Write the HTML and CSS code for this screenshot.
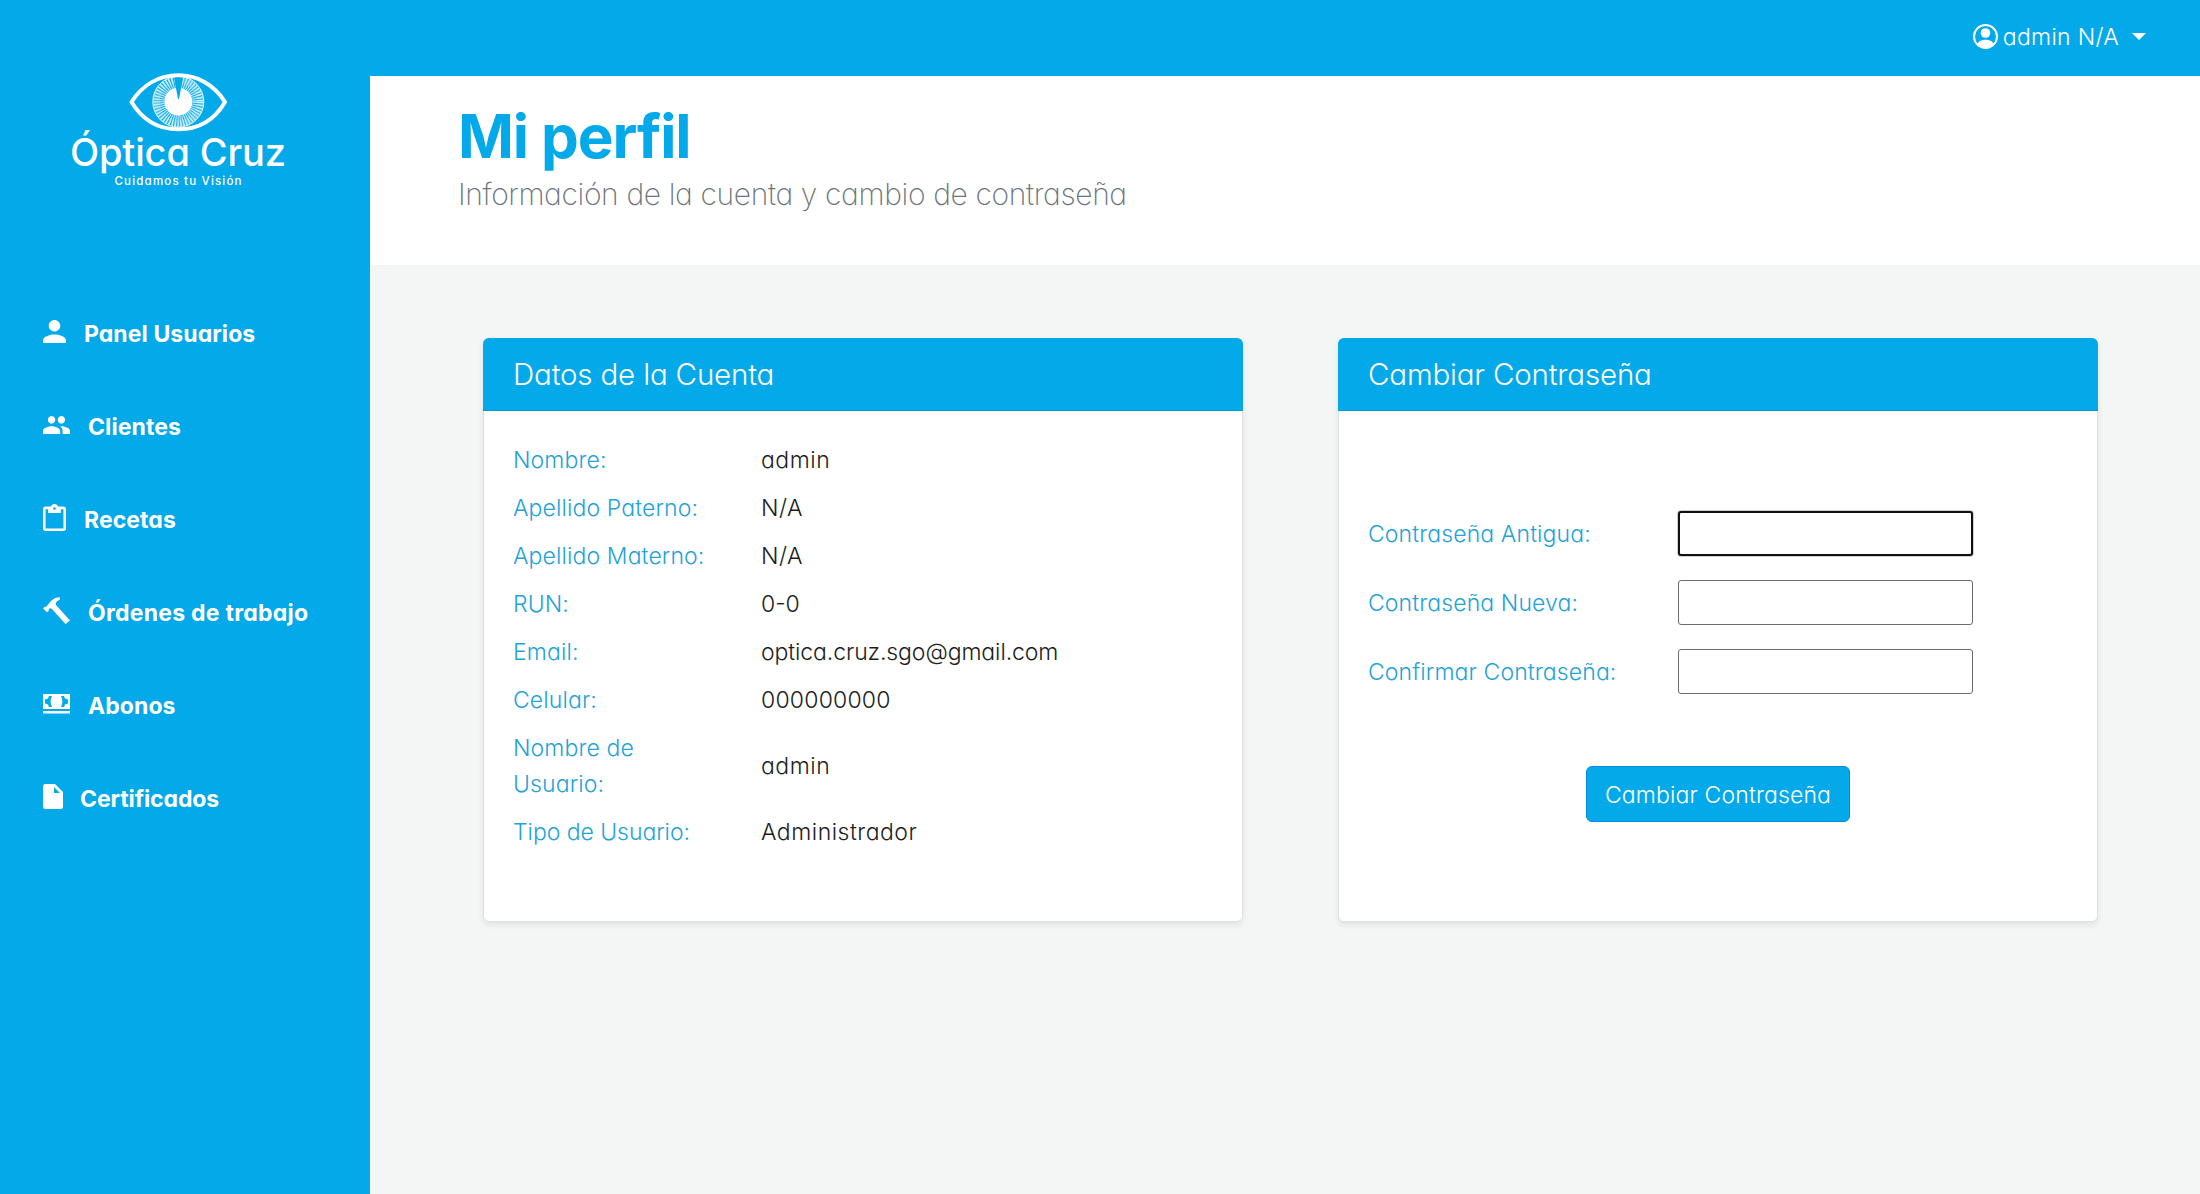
FILE: index.html
```html
<!DOCTYPE html>
<html lang="es">
<head>
<meta charset="utf-8">
<title>Mi perfil - Óptica Cruz</title>
<link rel="stylesheet" href="styles.css">
</head>
<body>
<div class="layout">
  <aside class="sidebar">
    <svg class="logo" width="260" height="140" viewBox="50 60 260 140" role="img" aria-label="Óptica Cruz">
      <path class="eye" d="M131.500 102C143 84 160 75.300 178.300 75.300S214 84 225 102C214 121 197 129.300 178.300 129.300S143 121 131.500 102Z"/>
      <circle class="iris-rays" cx="178.300" cy="101.700" r="19.500"/>
      <circle class="iris-rays fine" cx="178.300" cy="101.700" r="22"/>
      <circle class="iris-ring" cx="178.300" cy="101.700" r="25.500"/>
      <circle class="iris-core" cx="178.300" cy="101.700" r="14"/>
      <path class="pupil" d="M174 77.800Q178.500 76.600 183 77.800L179 99H178Z"/>
      <text class="brand" x="70" y="165.500" textLength="216" lengthAdjust="spacing">Óptica Cruz</text>
      <text class="tagline" x="114.500" y="185.300" textLength="127" lengthAdjust="spacing">Cuidamos tu Visión</text>
    </svg>
    <nav class="menu">
      <a class="menu-item"><svg width="23" height="23" viewBox="4 4 16 16"><path d="M12 12c2.200 0 4-1.800 4-4s-1.800-4-4-4-4 1.800-4 4 1.800 4 4 4zm0 2c-2.700 0-8 1.340-8 4v2h16v-2c0-2.660-5.300-4-8-4z"/></svg><span>Panel Usuarios</span></a>
      <a class="menu-item"><svg width="27" height="18" viewBox="1 5 22 14" preserveAspectRatio="none"><path d="M16 11c1.660 0 2.990-1.340 2.990-3S17.660 5 16 5s-3 1.340-3 3 1.340 3 3 3zm-8 0c1.660 0 2.990-1.340 2.990-3S9.660 5 8 5 5 6.340 5 8s1.340 3 3 3zm0 2c-2.330 0-7 1.170-7 3.500V19h14v-2.500c0-2.330-4.670-3.500-7-3.500zm8 0c-.29 0-.62.020-.97.050 1.160.84 1.970 1.970 1.970 3.450V19h6v-2.500c0-2.330-4.670-3.500-7-3.500z"/></svg><span>Clientes</span></a>
      <a class="menu-item"><svg width="23" height="27" viewBox="3 0 18 21" preserveAspectRatio="none"><path d="M19 2h-4.180C14.400.840 13.300 0 12 0S9.600.840 9.180 2H5c-1.100 0-2 .9-2 2v15c0 1.100.9 2 2 2h14c1.100 0 2-.9 2-2V4c0-1.100-.9-2-2-2zm-7 .5c.55 0 1 .45 1 1s-.45 1-1 1-1-.45-1-1 .45-1 1-1zM19 19H5V4h2v3h10V4h2v15z"/></svg><span>Recetas</span></a>
      <a class="menu-item wide"><svg width="27" height="27" viewBox="0 0 27 27"><path d="M0 11.500L2 9.500 3 10 8 4C11 1 14 .2 17 .3L16.500 3C13.500 4 12.500 5.500 13 8L27 23.500 22.500 27 8.500 11.500 6.800 11.200 5.500 13 5.700 14 4 15.200Z"/></svg><span>Órdenes de trabajo</span></a>
      <a class="menu-item"><svg width="27" height="20" viewBox="0 0 27 20"><path fill-rule="evenodd" d="M0 0H27V15H0ZM2 5.500V9.500L5 10.500 6 13H9Q6.300 7.500 9 2H6L5 4.500ZM25 5.500L22 4.500 21 2H18Q20.700 7.500 18 13H21L22 10.500 25 9.500ZM0 17H27V19.500H0Z"/></svg><span>Abonos</span></a>
      <a class="menu-item narrow"><svg width="20" height="25" viewBox="0 0 20 25"><path fill-rule="evenodd" d="M2.500 0H12L20 8V22.500Q20 25 17.500 25H2.500Q0 25 0 22.500V2.500Q0 0 2.500 0ZM11 3V9H17Z"/></svg><span>Certificados</span></a>
    </nav>
  </aside>
  <div class="main">
    <header class="topbar">
      <svg width="25" height="25" viewBox="0 0 25 25"><circle class="ring" cx="12.500" cy="12.500" r="11.500"/><circle cx="12.500" cy="9" r="4.800"/><path d="M4.500 20C5.500 17 9 15.700 12.500 15.700S19.500 17 20.500 20Q17 24.300 12.500 24.300T4.500 20Z"/></svg>
      <span class="user">admin N/A</span>
      <i class="caret"></i>
    </header>
    <section class="page-head">
      <h1>Mi perfil</h1>
      <p>Información de la cuenta y cambio de contraseña</p>
    </section>
    <main class="cards">
      <section class="card">
        <h2>Datos de la Cuenta</h2>
        <dl class="data">
          <dt>Nombre:</dt><dd class="short">admin</dd>
          <dt>Apellido Paterno:</dt><dd class="short">N/A</dd>
          <dt>Apellido Materno:</dt><dd class="short">N/A</dd>
          <dt>RUN:</dt><dd>0-0</dd>
          <dt>Email:</dt><dd class="email">optica.cruz.sgo@gmail.com</dd>
          <dt>Celular:</dt><dd class="digits">000000000</dd>
          <dt>Nombre de<br>Usuario:</dt><dd class="short">admin</dd>
          <dt class="type">Tipo de Usuario:</dt><dd class="short">Administrador</dd>
        </dl>
      </section>
      <section class="card">
        <h2>Cambiar Contraseña</h2>
        <form class="password-form">
          <label for="old">Contraseña Antigua:</label><input class="active" id="old" type="password">
          <label for="new">Contraseña Nueva:</label><input id="new" type="password">
          <label for="confirm">Confirmar Contraseña:</label><input id="confirm" type="password">
          <button type="button">Cambiar Contraseña</button>
        </form>
      </section>
    </main>
  </div>
</div>
</body>
</html>
```
FILE: styles.css
```css
* { box-sizing: border-box; }

body {
  margin: 0;
  font: 300 23px/36px Inter, "Liberation Sans", sans-serif;
  font-feature-settings: "cv11";
  color: #1b1e21;
  background: #f4f6f6;
}

.layout {
  display: grid;
  grid-template-columns: 370px 1fr;
  min-height: 1194px;
}

.sidebar {
  background: #04a9e9;
  color: #fff;
  padding-top: 60px;
}

.logo {
  display: block;
  margin-left: 50px;
}

.eye { fill: none; stroke: #fff; stroke-width: 4; stroke-linejoin: round; }
.iris-rays { fill: none; stroke: #fff; stroke-opacity: .75; stroke-width: 11; stroke-dasharray: 1.4 1.1; }
.iris-rays.fine { stroke-opacity: .25; stroke-width: 7; stroke-dasharray: 2 1; }
.iris-ring { fill: none; stroke: #fff; stroke-opacity: .9; stroke-width: 1; }
.iris-core { fill: #fff; }
.pupil { fill: #04a9e9; }
.brand { fill: #fff; font-size: 38px; font-weight: 500; }
.tagline { fill: #fff; font-size: 11.5px; font-weight: 450; }

.menu { padding: 85.5px 0 0 43px; }

.menu-item {
  display: flex;
  align-items: center;
  gap: 18px;
  height: 93px;
  font-weight: 650;
  letter-spacing: .08px;
}

.menu-item.wide { letter-spacing: .25px; }
.menu-item.narrow { gap: 17px; letter-spacing: -.1px; }

.menu-item svg, .topbar svg { fill: #fff; flex: none; }
.menu-item svg { margin-top: -1px; }
.menu-item span { padding-top: 4px; white-space: nowrap; }

.topbar {
  display: flex;
  align-items: center;
  height: 76px;
  padding: 0 54px 4px 0;
  justify-content: flex-end;
  background: #04a9e9;
  color: #fff;
}

.topbar .ring { fill: none; stroke: #fff; stroke-width: 2; }
.user { margin: 0 13px 0 5px; padding-top: 2px; letter-spacing: .3px; }
.caret { border: 7px solid transparent; border-top-color: #fff; border-bottom: 0; }

.page-head {
  height: 189px;
  padding: 26px 0 0 88px;
  background: #fff;
}

h1 {
  margin: 0;
  font-size: 60px;
  line-height: 69px;
  font-weight: 650;
  letter-spacing: -1.1px;
  color: #04a9e9;
}

.page-head p {
  margin: 0;
  font-size: 30px;
  line-height: 46px;
  font-weight: 250;
  letter-spacing: -.37px;
  color: #6c757d;
}

.cards {
  display: grid;
  grid-template-columns: 760px 760px;
  gap: 95px;
  padding: 73px 0 0 113px;
}

.card {
  height: 584px;
  background: #fff;
  border: 1px solid #dfe1e1;
  border-radius: 6px;
  box-shadow: 0 3px 6px rgba(0, 0, 0, .08);
}

h2 {
  margin: -1px -1px 0;
  padding: 0 30px;
  height: 73px;
  font-size: 29.5px;
  line-height: 73px;
  font-weight: 300;
  letter-spacing: -.17px;
  color: #fff;
  background: #04a9e9;
  border-bottom: 1px solid #0498d2;
  border-radius: 6px 6px 0 0;
}

.data {
  display: grid;
  grid-template-columns: 248px 1fr;
  align-items: center;
  margin: 25px 29px 0;
}

dt, label { color: #1fa3d8; letter-spacing: .12px; }
dt, dd { margin: 0; padding: 6px 0; }
dt.type { letter-spacing: -.05px; }
.short { letter-spacing: .5px; }
.email { letter-spacing: -.1px; }
.digits { letter-spacing: .2px; }

.password-form {
  display: grid;
  grid-template-columns: 310px 295px;
  align-items: center;
  row-gap: 24px;
  padding: 100px 29px 0;
}

input {
  width: 295px;
  height: 45px;
  border: 1px solid #6c6c6c;
  border-radius: 3px;
  background: #fff;
}

input.active { border: 2px solid #101010; box-shadow: 0 0 0 1px #cfcfcf; }

button {
  grid-column: 1 / -1;
  width: 264px;
  height: 56px;
  margin: 48px 0 0 218px;
  border: 1px solid #0789e4;
  border-radius: 6px;
  background: #04a9e9;
  color: #fff;
  font: inherit;
  font-feature-settings: inherit;
  letter-spacing: .15px;
  padding: 2px 0 0;
}
```
